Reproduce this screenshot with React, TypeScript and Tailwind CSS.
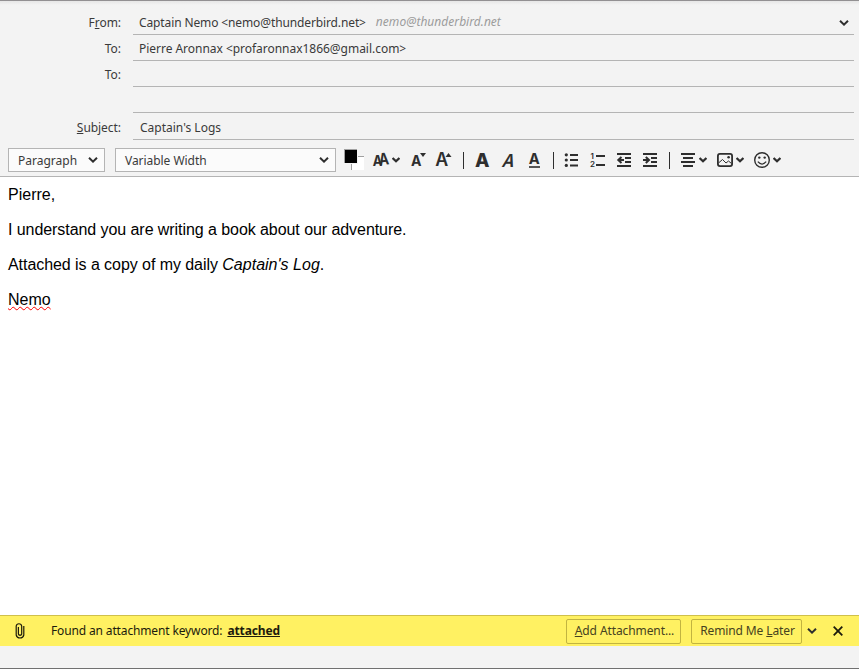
import React from "react";

const ui = "font-['Noto_Sans','Open_Sans',sans-serif] text-[12px] leading-[16px] text-[#3a3a3a]";

function Chevron({ className = "" }: { className?: string }) {
  return (
    <svg className={"shrink-0 " + className} width="10" height="6" viewBox="0 0 10 6" fill="none" stroke="#2e2e2e" strokeWidth="2">
      <path d="M1 0.8 L5 4.6 L9 0.8" />
    </svg>
  );
}

function MenuChevron() {
  return (
    <svg className="shrink-0" width="8" height="6" viewBox="0 0 8 6" fill="none" stroke="#2e2e2e" strokeWidth="2.2">
      <path d="M0.6 1 L4 4.3 L7.4 1" />
    </svg>
  );
}

function Row({ label, height, pad = "pt-[6px]", children }: { label?: React.ReactNode; height: string; pad?: string; children?: React.ReactNode }) {
  return (
    <div className={"flex " + height}>
      <div className={"w-[133px] shrink-0 pr-3 text-right tracking-[-0.05px] " + pad}>{label}</div>
      <div className={"mr-[5px] flex grow items-start border-b border-[#b4b4b4] pl-[6px] " + pad}>{children}</div>
    </div>
  );
}

function Icon({ box, width, className = "", children }: { box: string; width: number; className?: string; children: React.ReactNode }) {
  return (
    <svg
      className={"shrink-0 overflow-visible font-['Inter',sans-serif] " + className}
      width={width}
      height="24"
      viewBox={box}
      fill="none"
      stroke="#2e2e2e"
      strokeWidth="2"
    >
      {children}
    </svg>
  );
}

function Separator({ className }: { className: string }) {
  return <div className={"h-[17px] w-px shrink-0 bg-[#2e2e2e] " + className} />;
}

const glyph = { fill: "#2e2e2e", stroke: "none" };

function Toolbar() {
  return (
    <div className="flex h-[37px] items-start border-b border-[#b4b4b4] pl-2 pt-2">
      <div className="flex h-6 w-[97px] shrink-0 items-center justify-between border border-[#b4b4b4] bg-[#fbfbfb] pl-[9px] pr-[6px]">
        <span className="pt-[2px]">Paragraph</span>
        <Chevron />
      </div>
      <div className="ml-[10px] flex h-6 w-[221px] shrink-0 items-center justify-between border border-[#b4b4b4] bg-[#fbfbfb] pl-[9px] pr-[6px]">
        <span className="pt-[2px] tracking-[-0.05px]">Variable Width</span>
        <Chevron />
      </div>
      <div className="flex h-6 items-center">
        <Icon box="344 148 20 24" width={20} className="ml-2">
          <g stroke="none" shapeRendering="crispEdges">
            <rect x="351" y="156" width="13" height="14" fill="#a0a0a0" />
            <rect x="352" y="157" width="12" height="13" fill="#fff" />
            <rect x="344" y="149" width="14" height="15" fill="#f3f3f3" />
            <rect x="344" y="149" width="13" height="14" fill="#a0a0a0" />
            <rect x="345" y="150" width="12" height="13" fill="#000" />
          </g>
        </Icon>
        <Icon box="373 148 17 24" width={17} className="ml-[9px]">
          <g {...glyph} fontWeight="700">
            <text x="372.8" y="166.3" fontSize="14.5" textLength="9.6" lengthAdjust="spacingAndGlyphs">A</text>
            <text transform="translate(379.4 165.2) rotate(-6)" fontSize="16.5" textLength="10" lengthAdjust="spacingAndGlyphs">A</text>
          </g>
        </Icon>
        <div className="ml-[2px] flex"><MenuChevron /></div>
        <Icon box="411 148 16 24" width={16} className="ml-[11px]">
          <text x="411" y="166.3" fontSize="14.5" fontWeight="700" {...glyph} textLength="10.5" lengthAdjust="spacingAndGlyphs">A</text>
          <path d="M420 153 h6 l-3 4z" fill="#2e2e2e" stroke="none" />
        </Icon>
        <Icon box="435 148 18 24" width={18} className="ml-2">
          <text x="435.3" y="166.3" fontSize="18" fontWeight="600" {...glyph} textLength="13" lengthAdjust="spacingAndGlyphs">A</text>
          <path d="M445.5 157 h6 l-3 -4z" fill="#2e2e2e" stroke="none" />
        </Icon>
        <Separator className="ml-[10px]" />
        <Icon box="475 148 15 24" width={15} className="ml-[11px]">
          <text x="474.9" y="166.5" fontSize="18.5" fontWeight="800" {...glyph} textLength="14.5" lengthAdjust="spacingAndGlyphs">A</text>
        </Icon>
        <Icon box="501 148 14 24" width={14} className="ml-[11px]">
          <text transform="translate(501.2 166.5) skewX(-16)" fontSize="18" fontWeight="600" {...glyph} textLength="12" lengthAdjust="spacingAndGlyphs">A</text>
        </Icon>
        <Icon box="528 148 13 24" width={13} className="ml-[13px]">
          <text x="528.7" y="164.3" fontSize="15" fontWeight="700" {...glyph} textLength="11" lengthAdjust="spacingAndGlyphs">A</text>
          <path d="M529 167 H540" strokeWidth="1.6" />
        </Icon>
        <Separator className="ml-3" />
        <Icon box="564 148 15 24" width={15} className="ml-[10px]">
          <path d="M570 155 H578 M570 160 H578 M570 165.5 H578" />
          <g fill="#2e2e2e" stroke="none">
            <circle cx="566.3" cy="154.8" r="1.6" />
            <circle cx="566.3" cy="160" r="1.6" />
            <circle cx="566.3" cy="165.4" r="1.6" />
          </g>
        </Icon>
        <Icon box="589 148 17 24" width={17} className="ml-[10px]">
          <path d="M596 156 H605 M596 165 H605" />
          <g fill="#2e2e2e" stroke="none" fontSize="8" fontWeight="600">
            <text x="590.5" y="158.8">1</text>
            <text x="590" y="167.3">2</text>
          </g>
        </Icon>
        <Icon box="616 148 16 24" width={16} className="ml-[10px]">
          <path d="M617 154 H631 M625 158 H631 M625 162 H631 M617 166 H631 M618.5 160 H624 M621.5 157 L618.3 160 L621.5 163" strokeWidth="2" />
        </Icon>
        <Icon box="642 148 16 24" width={16} className="ml-[10px]">
          <path d="M643 154 H657 M651 158 H657 M651 162 H657 M643 166 H657 M643 160 H648.5 M645.8 157 L649 160 L645.8 163" strokeWidth="2" />
        </Icon>
        <Separator className="ml-[11px]" />
        <Icon box="680 148 16 24" width={16} className="ml-[10px]">
          <path d="M681 154 H695 M683 158 H693 M681 162 H695 M683 166 H693" strokeWidth="2" />
        </Icon>
        <div className="ml-[3px] flex"><MenuChevron /></div>
        <Icon box="716 148 18 24" width={18} className="ml-[9px]">
          <rect x="717.9" y="153.9" width="14.2" height="12.2" rx="2" strokeWidth="1.8" />
          <path d="M718.5 163 L722.5 159.5 L726 163 L728.5 161 L731.5 163.5" strokeWidth="1" />
          <circle cx="728.6" cy="157.3" r="1.3" fill="#2e2e2e" stroke="none" />
        </Icon>
        <div className="ml-[2px] flex"><MenuChevron /></div>
        <Icon box="753 148 18 24" width={18} className="ml-[9px]">
          <circle cx="762" cy="160" r="7.3" strokeWidth="1.4" />
          <circle cx="759.3" cy="157.6" r="1.2" fill="#2e2e2e" stroke="none" />
          <circle cx="764.7" cy="157.6" r="1.2" fill="#2e2e2e" stroke="none" />
          <path d="M757.8 161.7 Q762 166.4 766.2 161.7" strokeWidth="1.2" />
        </Icon>
        <div className="ml-[2px] flex"><MenuChevron /></div>
      </div>
    </div>
  );
}

function Notification() {
  return (
    <div className="flex h-[31px] items-center border-t border-[#cfc04c] bg-[#fff162] text-[#1c1b0c]">
      <svg className="ml-[15px] shrink-0" width="10" height="18" viewBox="0 0 10 18" fill="none" stroke="#1c1b0c" strokeWidth="1.2">
        <path d="M8.8 4 V13 a3.9 3.9 0 0 1 -7.6 0 V4 a2.8 2.8 0 0 1 5.5 0 V12 a1.7 1.7 0 0 1 -3.3 0 V5" />
      </svg>
      <span className="ml-[26px] whitespace-pre tracking-[-0.14px]">Found an attachment keyword:</span>
      <span className="ml-[5px] font-bold tracking-[-0.12px] underline">attached</span>
      <div className="ml-auto flex h-[25px] w-[115px] items-center justify-center rounded-[2px] border border-[#c2b440] pl-[2px] tracking-[-0.1px] text-[#464220]">
        <span><u>A</u>dd Attachment...</span>
      </div>
      <div className="ml-[10px] flex h-[25px] w-[111px] items-center justify-center rounded-[2px] border border-[#c2b440] pl-[2px] tracking-[-0.12px] text-[#464220]">
        <span>Remind Me <u>L</u>ater</span>
      </div>
      <Chevron className="ml-[5px]" />
      <svg className="ml-4 mr-4 shrink-0" width="10" height="10" viewBox="0 0 10 10" stroke="#1c1b0c" strokeWidth="1.8">
        <path d="M0.7 0.7 L9.3 9.3 M9.3 0.7 L0.7 9.3" />
      </svg>
    </div>
  );
}

export default function App() {
  return (
    <div className={"flex h-[669px] w-[859px] flex-col overflow-hidden border-b border-[#707070] bg-[#f3f3f3] " + ui}>
      <div className="h-[9px] shrink-0 border-t border-[#929092] bg-linear-to-b from-[#e6e6e6] to-[#f3f3f3] to-50%" />
      <Row height="h-[26px]" label={<>F<u>r</u>om:</>}>
        <span className="tracking-[-0.12px]">Captain Nemo &lt;nemo@thunderbird.net&gt;</span>
        <span className="-mt-px ml-[10px] italic tracking-[0.03px] text-[#9c9c9c]">nemo@thunderbird.net</span>
        <Chevron className="ml-auto mr-[5px] mt-[5px]" />
      </Row>
      <Row height="h-[26px]" label="To:">
        <span className="tracking-[-0.03px]">Pierre Aronnax &lt;profaronnax1866@gmail.com&gt;</span>
      </Row>
      <Row height="h-[26px]" label="To:" />
      <Row height="h-[26px]" />
      <Row height="h-[27px]" pad="pt-[7px]" label={<><u>S</u>ubject:</>}>
        <span className="ml-px">Captain's Logs</span>
      </Row>
      <Toolbar />
      <div className="flex grow flex-col gap-4 bg-white px-2 pt-2 font-['Liberation_Sans',Arial,sans-serif] text-[16px] leading-[19px] text-black">
        <p>Pierre,</p>
        <p className="tracking-[-0.065px]">I understand you are writing a book about our adventure.</p>
        <p className="tracking-[-0.06px]">Attached is a copy of my daily <i className="tracking-[0.02px]">Captain's Log</i>.</p>
        <p><span className="underline decoration-[#ff0000] decoration-wavy decoration-1 underline-offset-1">Nemo</span></p>
      </div>
      <Notification />
      <div className="h-[22px] shrink-0" />
    </div>
  );
}
